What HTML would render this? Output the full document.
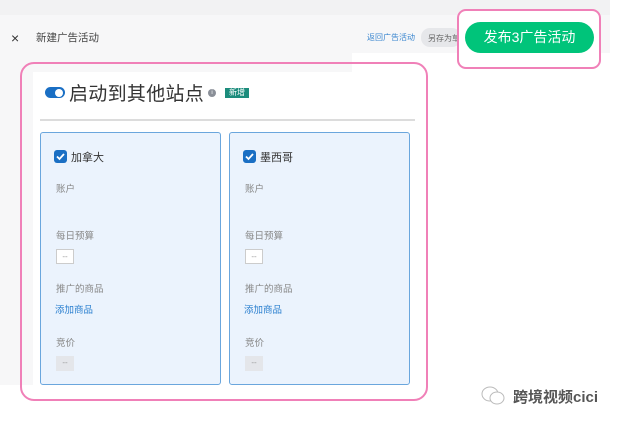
<!DOCTYPE html>
<html><head><meta charset="utf-8"><style>
*{margin:0;padding:0;box-sizing:border-box}
body{width:617px;height:424px;background:#fff;position:relative;overflow:hidden;font-family:"Liberation Sans","Noto Sans CJK SC",sans-serif}
.a{position:absolute}
.card{position:absolute;top:132px;width:181px;height:253px;background:#ebf3fd;border:1.5px solid #6aa6dd;border-radius:3px}
.lbl{position:absolute;left:15px;font-size:9.5px;color:#888}
.cb{position:absolute;left:13px;top:17px;width:13px;height:13px;background:#1a6fc4;border-radius:3px}
.nm{position:absolute;left:30px;top:16px;font-size:11px;color:#333}
.dash{position:absolute;left:15px;width:18px;height:15px;font-size:8px;color:#999;text-align:center;line-height:14px}
</style></head><body>
<div class="a" style="left:0;top:0;width:610px;height:385px;background:#f7f7f8"></div>
<div class="a" style="left:0;top:0;width:610px;height:15px;background:#f2f2f3"></div>
<div class="a" style="left:352px;top:53px;width:258px;height:332px;background:#fff"></div>
<div class="a" style="left:33px;top:72px;width:386px;height:313px;background:#fff"></div>
<div class="a" style="left:11px;top:30px;font-size:14px;color:#333">×</div>
<div class="a" style="left:36px;top:30px;font-size:10.5px;color:#444">新建广告活动</div>
<div class="a" style="left:367px;top:32px;font-size:8px;color:#3a86cf">返回广告活动</div>
<div class="a" style="left:421px;top:28px;width:40px;height:19px;background:#e6e7ea;border-radius:9px;font-size:8px;color:#666;padding:5px 0 0 7px;overflow:hidden;white-space:nowrap">另存为草</div>
<div class="a" style="left:457px;top:9px;width:144px;height:60px;border:2px solid #f080b8;border-radius:9px;background:#fff"></div>
<div class="a" style="left:465px;top:22px;width:129px;height:31px;background:#00c47a;border-radius:16px;color:#fff;font-size:14px;text-align:center;line-height:31px">发布3广告活动</div>
<div class="a" style="left:20px;top:62px;width:408px;height:339px;border:2px solid #f080b8;border-radius:14px"></div>
<div class="a" style="left:45px;top:87px;width:20px;height:11px;background:#1a6fc4;border-radius:6px"><div class="a" style="left:10px;top:1.5px;width:8px;height:8px;background:#fff;border-radius:50%"></div></div>
<div class="a" style="left:69px;top:79px;font-size:19px;color:#333;letter-spacing:0.3px">启动到其他站点</div>
<div class="a" style="left:208px;top:89px;width:8px;height:8px;border-radius:50%;background:#8a8f98;color:#fff;font-size:6px;text-align:center;line-height:8px">i</div>
<div class="a" style="left:225px;top:88px;width:24px;height:10px;background:#1c8c7c;color:#fff;font-size:8px;line-height:10px;text-align:center">新增</div>
<div class="a" style="left:40px;top:119px;width:375px;height:2px;background:#dcdcdc"></div>
<div class="card" style="left:40px">
<div class="cb"><svg width="13" height="13"><path d="M3 6.5l2.5 2.5 4.5-5" stroke="#fff" stroke-width="1.8" fill="none"/></svg></div>
<div class="nm">加拿大</div>
<div class="lbl" style="top:48px">账户</div>
<div class="lbl" style="top:95px">每日预算</div>
<div class="dash" style="top:116px;background:#fff;border:1px solid #ccc">--</div>
<div class="lbl" style="top:148px">推广的商品</div>
<div class="lbl" style="top:169px;left:14px;color:#2a7fcf">添加商品</div>
<div class="lbl" style="top:202px">竞价</div>
<div class="dash" style="top:223px;background:#e4e6ea">--</div>
</div>
<div class="card" style="left:229px">
<div class="cb"><svg width="13" height="13"><path d="M3 6.5l2.5 2.5 4.5-5" stroke="#fff" stroke-width="1.8" fill="none"/></svg></div>
<div class="nm">墨西哥</div>
<div class="lbl" style="top:48px">账户</div>
<div class="lbl" style="top:95px">每日预算</div>
<div class="dash" style="top:116px;background:#fff;border:1px solid #ccc">--</div>
<div class="lbl" style="top:148px">推广的商品</div>
<div class="lbl" style="top:169px;left:14px;color:#2a7fcf">添加商品</div>
<div class="lbl" style="top:202px">竞价</div>
<div class="dash" style="top:223px;background:#e4e6ea">--</div>
</div>
<svg class="a" style="left:481px;top:385px" width="26" height="22"><ellipse cx="9" cy="9" rx="8" ry="7" fill="none" stroke="#bbb"/><ellipse cx="16" cy="13" rx="7" ry="6" fill="#fff" stroke="#bbb"/></svg>
<div class="a" style="left:513px;top:386px;font-size:15px;color:#555;font-weight:bold">跨境视频cici</div>
</body></html>
